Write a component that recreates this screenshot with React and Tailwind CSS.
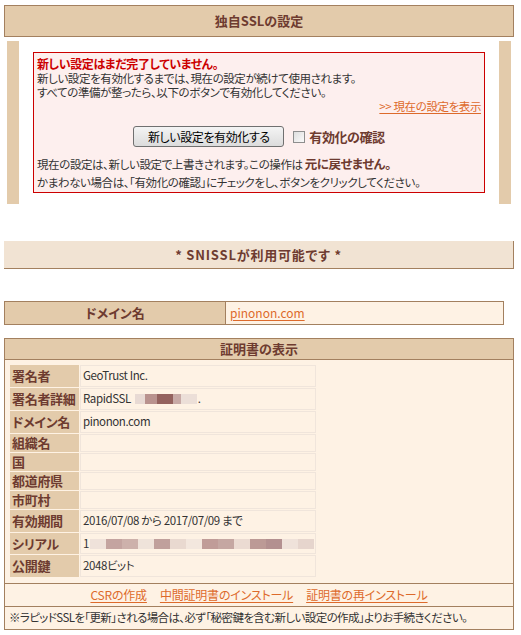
import React from 'react';

const brown = 'text-[#6e3b30]';
const link = 'text-[#dd6a2b] underline underline-offset-2';

const rows = [
  { label: '署名者', value: 'GeoTrust Inc.', h: 'h-[22px]' },
  { label: '署名者詳細', value: 'detail', h: 'h-[22px]' },
  { label: 'ドメイン名', value: 'pinonon.com', h: 'h-[22px]' },
  { label: '組織名', value: '', h: 'h-[18px]' },
  { label: '国', value: '', h: 'h-[18px]' },
  { label: '都道府県', value: '', h: 'h-[18px]' },
  { label: '市町村', value: '', h: 'h-[18px]' },
  { label: '有効期間', value: '2016/07/08 から 2017/07/09 まで', h: 'h-[22px]' },
  { label: 'シリアル', value: 'serial', h: 'h-[21px]' },
  { label: '公開鍵', value: '2048ビット', h: 'h-[22px]' },
];

const serialBlocks = [
  '#efe2da', '#c4a4a0', '#cdb1ab', '#efe3da', '#c0a09c', '#e9d9d0', '#f3e7de',
  '#c09c98', '#c5a7a2', '#ebdbd2', '#bc9a96', '#b39090', '#efe2da', '#e6d5cd',
];

const Blurred = () => (
  <span className="inline-flex items-center h-[10px] ml-[4px]">
    <span className="w-[10px] h-full bg-[#e8dad4]" />
    <span className="w-[12px] h-full bg-[#b9928e]" />
    <span className="w-[16px] h-full bg-[#94625e]" />
    <span className="w-[8px] h-full bg-[#c8aaa6]" />
    <span className="w-[16px] h-full bg-[#ecdfd8]" />
    <span className="ml-[1px] text-[#333]">.</span>
  </span>
);

const Serial = () => (
  <span className="flex items-center">
    <span>1</span>
    <span className="flex h-[10px] ml-[1px]">
      {serialBlocks.map((c, i) => (
        <span key={i} className="w-[16px] h-full" style={{ backgroundColor: c }} />
      ))}
    </span>
  </span>
);

const CertValue = ({ value }) => {
  if (value === 'detail') {
    return (
      <span className="flex items-center">
        RapidSSL
        <Blurred />
      </span>
    );
  }
  if (value === 'serial') return <Serial />;
  return <span>{value}</span>;
};

export default function App() {
  return (
    <div
      className="w-[521px] min-h-[635px] bg-white pt-[5px] text-[11.5px] tracking-[-0.4px] text-[#333]"
      style={{ fontFamily: '"Noto Sans CJK JP", "Noto Sans", sans-serif', fontFeatureSettings: '"palt"' }}
    >
      {/* header */}
      <div className={`ml-[4px] w-[510px] h-[32px] border border-[#a3805f] bg-[#e3cbab] flex items-center justify-center font-bold text-[13px] tracking-normal ${brown}`}>
        独自SSLの設定
      </div>

      {/* pending panel */}
      <div className="mt-[4px] ml-[7px] w-[504px] h-[163px] border-x-[12px] border-[#e3cbab] bg-white pt-[11px] pl-[14px]">
        <div className="w-[452px] h-[141px] border border-[#cc0000] bg-[#fdefee] pt-[4px] pl-[3px] pr-[3px] leading-[14px]">
          <div className="font-bold text-[12px] text-[#cc0000]">新しい設定はまだ完了していません。</div>
          <div>新しい設定を有効化するまでは、現在の設定が続けて使用されます。</div>
          <div>すべての準備が整ったら、以下のボタンで有効化してください。</div>
          <div className="flex justify-end">
            <a className={link}>&gt;&gt; 現在の設定を表示</a>
          </div>
          <div className="mt-[13px] flex items-center justify-center">
            <button className="w-[151px] h-[21px] border border-[#707070] rounded-[3px] bg-gradient-to-b from-[#f4f4f4] to-[#dcdcdc] text-[12px] text-black leading-none">
              新しい設定を有効化する
            </button>
            <span className="ml-[9px] w-[12px] h-[12px] border border-[#8e8e8e] bg-gradient-to-br from-[#dedede] to-[#fafafa]" />
            <span className={`ml-[4px] font-bold text-[13px] ${brown}`}>有効化の確認</span>
          </div>
          <div className="mt-[8px] leading-[18px]">
            現在の設定は、新しい設定で上書きされます。この操作は <b className={`text-[12.5px] ${brown}`}>元に戻せません。</b>
          </div>
          <div className="leading-[18px]">かまわない場合は、「有効化の確認」にチェックをし、ボタンをクリックしてください。</div>
        </div>
      </div>

      {/* SNI */}
      <div className={`mt-[37px] ml-[4px] w-[510px] h-[28px] border-b border-r border-[#a3805f] bg-[#f1e3d3] flex items-center justify-center font-bold text-[13px] tracking-[0.8px] ${brown}`}>
        * SNISSLが利用可能です *
      </div>

      {/* domain row */}
      <div className="mt-[32px] ml-[4px] w-[500px] h-[24px] border border-[#a3805f] flex">
        <div className={`w-[221px] bg-[#e3cbab] border-r border-[#a3805f] flex items-center justify-center font-bold text-[13px] tracking-normal ${brown}`}>
          ドメイン名
        </div>
        <div className="flex-1 bg-[#fef2e4] flex items-center pl-[4px] text-[12px] tracking-normal">
          <a className={link}>pinonon.com</a>
        </div>
      </div>

      {/* certificate */}
      <div className="mt-[13px] ml-[4px] w-[510px] h-[292px] border border-[#a3805f] bg-[#fef2e4] flex flex-col">
        <div className={`h-[21px] bg-[#e3cbab] border-b border-[#a3805f] flex items-center justify-center font-bold text-[13px] tracking-normal ${brown}`}>
          証明書の表示
        </div>
        <div className="pt-[5px] pl-[5px] h-[223px] flex flex-col gap-[1px]">
          {rows.map((r) => (
            <div key={r.label} className={`flex gap-[1px] ${r.h}`}>
              <div className={`w-[69px] bg-[#e3cbab] flex items-center pl-[2px] font-bold text-[13px] tracking-[-0.3px] whitespace-nowrap ${brown}`}>
                {r.label}
              </div>
              <div className="w-[236px] border border-[#f0e5db] flex items-center pl-[2px] text-[#333]">
                <CertValue value={r.value} />
              </div>
            </div>
          ))}
        </div>
        <div className="h-[23px] border-t border-[#a3805f] flex items-center justify-center gap-[13px] text-[12px] tracking-[-0.2px]">
          <a className={link}>CSRの作成</a>
          <a className={link}>中間証明書のインストール</a>
          <a className={link}>証明書の再インストール</a>
        </div>
        <div className="flex-1 border-t border-[#a3805f] flex items-center pl-[4px] whitespace-nowrap tracking-[-0.6px]">
          ※ラピッドSSLを「更新」される場合は、必ず「秘密鍵を含む新しい設定の作成」よりお手続きください。
        </div>
      </div>
    </div>
  );
}
